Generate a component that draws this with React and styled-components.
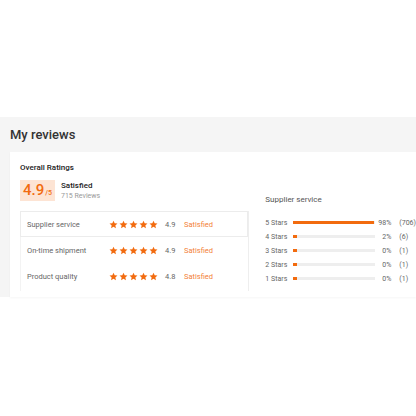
import React from 'react';
import styled, { createGlobalStyle } from 'styled-components';

const GlobalStyle = createGlobalStyle`
    body {
        margin: 0;
        background: #ffffff;
        font-family: Roboto, "Liberation Sans", Arial, sans-serif;
        color: #333;
    }
`;

const ORANGE = '#f26b0f';

const RATINGS = [
    { label: 'Supplier service', score: '4.9', active: true },
    { label: 'On-time shipment', score: '4.9' },
    { label: 'Product quality', score: '4.8' },
];

const DISTRIBUTION = [
    { stars: 5, percent: 98, count: 706 },
    { stars: 4, percent: 2, count: 6 },
    { stars: 3, percent: 0, count: 1 },
    { stars: 2, percent: 0, count: 1 },
    { stars: 1, percent: 0, count: 1 },
];

const Star = () => (
    <svg width="9" height="9" viewBox="0 0 24 24">
        <path
            fill={ORANGE}
            d="M12 1.8l3.1 6.9 7.5.7-5.7 5 1.7 7.4L12 17.9l-6.6 3.9 1.7-7.4-5.7-5 7.5-.7z"
        />
    </svg>
);

const App = () => {
    return (
        <>
            <GlobalStyle />
            <Page>
                <Section>
                    <Heading>My reviews</Heading>
                    <Card>
                        <Left>
                            <Title>Overall Ratings</Title>
                            <Summary>
                                <ScoreBox>
                                    4.9<small>/5</small>
                                </ScoreBox>
                                <SummaryText>
                                    <strong>Satisfied</strong>
                                    <span>715 Reviews</span>
                                </SummaryText>
                            </Summary>
                            <Table>
                                {RATINGS.map((item) => (
                                    <RatingRow key={item.label} $active={item.active}>
                                        <RowLabel>{item.label}</RowLabel>
                                        <Stars>
                                            {[0, 1, 2, 3, 4].map((i) => <Star key={i} />)}
                                        </Stars>
                                        <RowScore>{item.score}</RowScore>
                                        <RowStatus>Satisfied</RowStatus>
                                    </RatingRow>
                                ))}
                            </Table>
                        </Left>
                        <Right>
                            <SubTitle>Supplier service</SubTitle>
                            <Bars>
                                {DISTRIBUTION.map((row) => (
                                    <BarRow key={row.stars}>
                                        <BarLabel>{row.stars} Stars</BarLabel>
                                        <Track>
                                            <Fill style={{ width: `${Math.max(row.percent, 4)}%` }} />
                                        </Track>
                                        <Percent>{row.percent}%</Percent>
                                        <Count>({row.count})</Count>
                                    </BarRow>
                                ))}
                            </Bars>
                        </Right>
                    </Card>
                </Section>
            </Page>
        </>
    );
};

const Page = styled.div`
    width: 416px;
    height: 416px;
    padding-top: 117px;
    box-sizing: border-box;
    overflow: hidden;
`;

const Section = styled.section`
    background: #f5f5f5;
    padding-left: 10px;
`;

const Heading = styled.h2`
    margin: 0;
    padding: 10px 0 0;
    height: 35px;
    box-sizing: border-box;
    font-size: 13px;
    font-weight: 500;
    color: #333;
`;

const Card = styled.div`
    background: #fff;
    height: 145px;
    display: flex;
    box-shadow: 0 1px 2px rgba(0, 0, 0, 0.04);
`;

const Left = styled.div`
    width: 240px;
    padding: 11px 0 0 10px;
`;

const Title = styled.div`
    font-size: 8px;
    font-weight: 500;
    color: #222;
`;

const Summary = styled.div`
    display: flex;
    align-items: center;
    margin-top: 7px;
    gap: 6px;
`;

const ScoreBox = styled.div`
    width: 35px;
    height: 21px;
    background: #fde4d4;
    color: ${ORANGE};
    font-size: 15px;
    font-weight: 500;
    display: flex;
    align-items: baseline;
    justify-content: center;
    line-height: 21px;

    small {
        font-size: 7px;
        margin-left: 1px;
    }
`;

const SummaryText = styled.div`
    display: flex;
    flex-direction: column;
    line-height: 10px;
    padding-top: 2px;

    strong {
        font-size: 8px;
        font-weight: 500;
        color: #222;
    }

    span {
        font-size: 7px;
        color: #999;
    }
`;

const Table = styled.div`
    margin-top: 10px;
    border-right: 1px solid #eee;
    border-left: 1px solid #f3f3f3;
    height: 80px;
`;

const RatingRow = styled.div`
    display: flex;
    align-items: center;
    height: 24px;
    padding-left: 6px;
    margin-left: -1px;
    border: 1px solid ${({ $active }) => ($active ? '#ececec' : 'transparent')};
    font-size: 7.5px;
`;

const RowLabel = styled.span`
    width: 82px;
    color: #666;
`;

const Stars = styled.span`
    display: flex;
    gap: 1px;
    width: 56px;
`;

const RowScore = styled.span`
    width: 19px;
    color: #666;
`;

const RowStatus = styled.span`
    color: ${ORANGE};
    opacity: 0.85;
`;

const Right = styled.div`
    flex: 1;
    padding: 43px 0 0 16px;
`;

const SubTitle = styled.div`
    font-size: 8px;
    color: #555;
`;

const Bars = styled.div`
    margin-top: 14px;
    display: flex;
    flex-direction: column;
    gap: 5px;
`;

const BarRow = styled.div`
    display: flex;
    align-items: center;
    height: 9px;
    font-size: 7px;
    color: #666;
`;

const BarLabel = styled.span`
    width: 28px;
`;

const Track = styled.div`
    width: 82px;
    height: 3.5px;
    background: #eee;
`;

const Fill = styled.div`
    height: 100%;
    background: ${ORANGE};
`;

const Percent = styled.span`
    width: 16px;
    text-align: right;
    margin-right: 8px;
`;

const Count = styled.span``;

export default App;
